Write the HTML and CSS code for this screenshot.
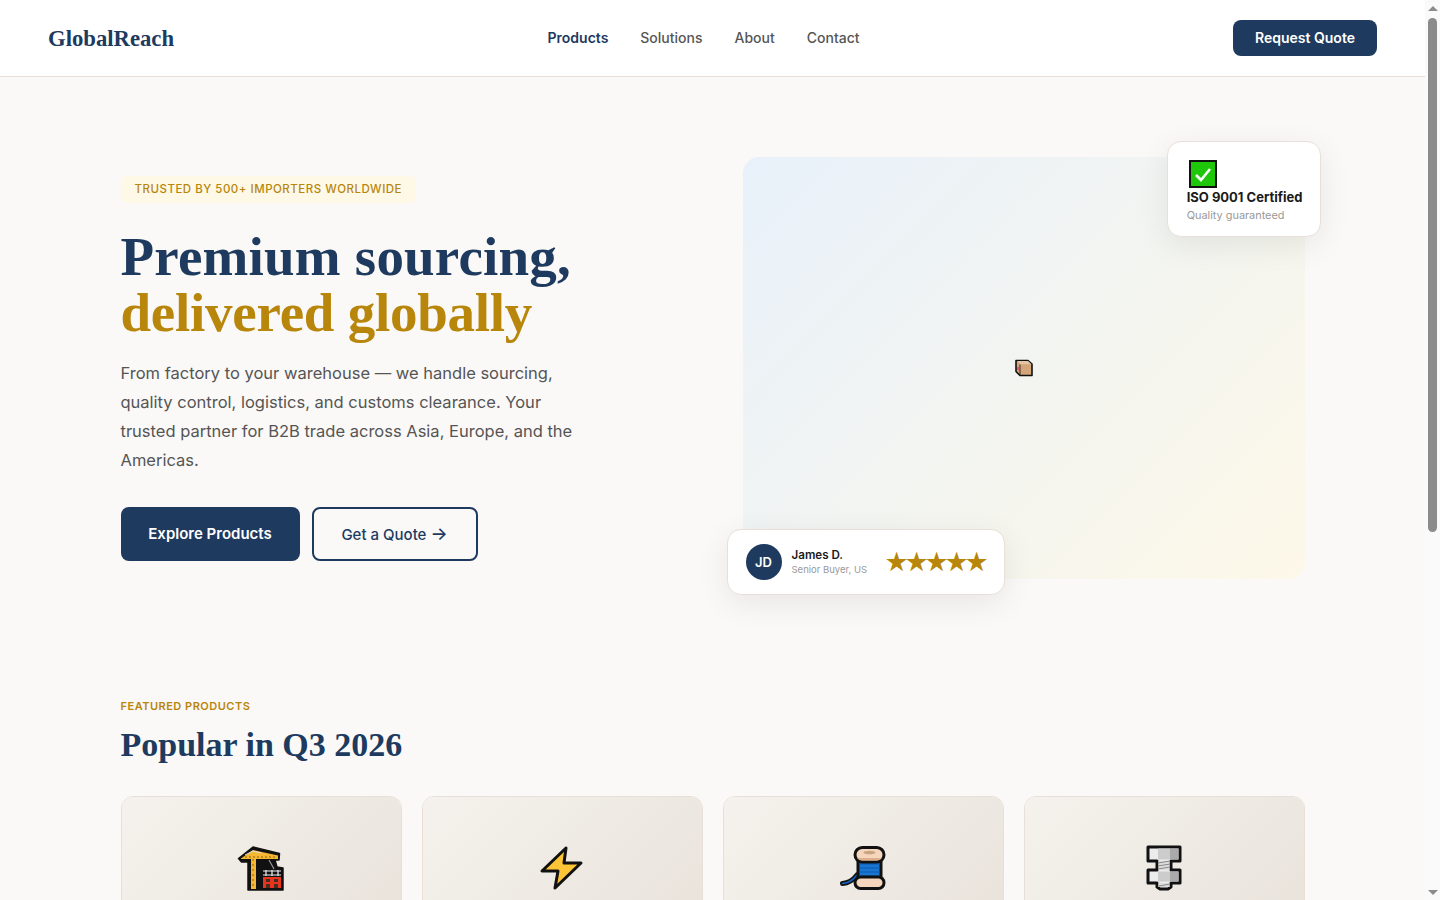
FILE: index.html
```html
<!DOCTYPE html>
<html lang="en">
<head>
    <meta charset="UTF-8">
    <meta name="viewport" content="width=device-width, initial-scale=1.0">
    <title>GlobalReach</title>
    <link rel="stylesheet" href="styles.css">
</head>
<body>
    <header class="navbar">
        <a class="logo" href="#">GlobalReach</a>
        <nav class="nav-links">
            <a class="active" href="#">Products</a>
            <a href="#">Solutions</a>
            <a href="#">About</a>
            <a href="#">Contact</a>
        </nav>
        <a class="nav-btn" href="#">Request Quote</a>
    </header>

    <!-- Hero -->
    <section class="hero">
        <div class="hero-text">
            <span class="badge">TRUSTED BY 500+ IMPORTERS WORLDWIDE</span>
            <h1>Premium sourcing,<br><span class="gold">delivered globally</span></h1>
            <p>From factory to your warehouse — we handle sourcing, quality control, logistics, and customs clearance. Your trusted partner for B2B trade across Asia, Europe, and the Americas.</p>
            <div class="hero-btns">
                <a class="btn-primary" href="#">Explore Products</a>
                <a class="btn-outline" href="#">Get a Quote <span class="arrow">→</span></a>
            </div>
        </div>
        <div class="hero-image">
            <svg class="box-icon" viewBox="0 0 18 18" width="18" height="18">
                <path d="M1 1.5 H13 L17 5 V16.5 H5 L1 12.5 Z" fill="#d2a679" stroke="#111" stroke-width="1.6" stroke-linejoin="round"/>
                <path d="M2 2 H13 L16.4 5.2 H5.4 Z" fill="#e3c4a2"/>
                <path d="M5 5.5 V16" stroke="#111" stroke-width=".8"/>
                <rect x="2" y="8" width="2" height="3" fill="#e0566a"/>
            </svg>
            <div class="float-card cert-card">
                <svg class="check-icon" viewBox="0 0 28 28" width="28" height="28">
                    <rect x="1" y="1" width="26" height="26" fill="#1ec70a" stroke="#111" stroke-width="2"/>
                    <path d="M7 15 L12 20 L21 9" fill="none" stroke="#fff" stroke-width="2.6"/>
                </svg>
                <div class="cert-title">ISO 9001 Certified</div>
                <div class="cert-sub">Quality guaranteed</div>
            </div>
            <div class="float-card review-card">
                <div class="avatar">JD</div>
                <div class="review-who">
                    <div class="review-name">James D.</div>
                    <div class="review-role">Senior Buyer, US</div>
                </div>
                <div class="stars">★★★★★</div>
            </div>
        </div>
    </section>

    <!-- Featured products -->
    <section class="featured">
        <div class="section-label">FEATURED PRODUCTS</div>
        <h2>Popular in Q3 2026</h2>
        <div class="product-grid">
            <div class="product-card">
                <div class="product-img">
                    <svg viewBox="0 0 48 48" width="48" height="48">
                        <path d="M1.5 14.5 L16 3 L42.5 9.5 L42 16 L38 16 L40 23 L46 24 V46 H11 V18 H4.5 Z" fill="#111" stroke="#111" stroke-width="1.5" stroke-linejoin="round"/>
                        <path d="M4 14.5 L16 6 L41 11.5 L41 15 L4 15 Z" fill="#f5b731"/>
                        <path d="M14 13 H19 V45 H14 Z" fill="#f5b731"/>
                        <path d="M8 13 H40 M15 16 H18 M15 21 H18 M15 26 H18 M15 31 H18 M15 36 H18 M15 41 H18" stroke="#8a6414" stroke-width="1" stroke-dasharray="2 2"/>
                        <path d="M8 11 L16 7 L24 9" fill="none" stroke="#ddd" stroke-width="1"/>
                        <path d="M32 16 L37 25" stroke="#999" stroke-width="1.2"/>
                        <path d="M26 27 H44 M26 31 H44 M29 26 V32 M35 26 V32 M41 26 V32" stroke="#eee" stroke-width="1.2"/>
                        <rect x="26" y="33" width="18" height="11" fill="#e5361d"/>
                        <path d="M29 35 H33 V38 H29 Z M37 35 H41 V38 H37 Z M29 40 H33 V44 H29 Z M37 40 H41 V44 H37 Z" fill="#4a2a22"/>
                    </svg>
                </div>
                <div class="product-body"></div>
            </div>
            <div class="product-card">
                <div class="product-img">
                    <svg viewBox="0 0 48 48" width="48" height="48">
                        <path d="M28 4 L4 27 H20 L17 44 L43 19 H26 Z" fill="#fcc537" stroke="#111" stroke-width="3" stroke-linejoin="round"/>
                    </svg>
                </div>
                <div class="product-body"></div>
            </div>
            <div class="product-card">
                <div class="product-img">
                    <svg viewBox="0 0 48 48" width="48" height="48">
                        <path d="M18 31 Q12 39 3.5 39.5" fill="none" stroke="#111" stroke-width="5" stroke-linecap="round"/>
                        <path d="M18 31 Q12 39 3.5 39.5" fill="none" stroke="#1166c4" stroke-width="1.6" stroke-linecap="round"/>
                        <rect x="19" y="12" width="23" height="24" fill="#1976d2" stroke="#111" stroke-width="3"/>
                        <path d="M20 20 H41 M20 24 H41 M20 28 H41 M20 32 H41" stroke="#0d59ab" stroke-width="1.2"/>
                        <rect x="16" y="3.5" width="29" height="14.5" rx="7.2" fill="#f6d5bd" stroke="#111" stroke-width="3"/>
                        <path d="M18 14 H43 Q41 16.5 38 16.5 H23 Q20 16.5 18 14 Z" fill="#dcb08d"/>
                        <ellipse cx="30.5" cy="8.5" rx="6" ry="1.8" fill="#c9a57f"/>
                        <rect x="16" y="33" width="29" height="11.5" rx="5.7" fill="#f6d5bd" stroke="#111" stroke-width="3"/>
                    </svg>
                </div>
                <div class="product-body"></div>
            </div>
            <div class="product-card">
                <div class="product-img">
                    <svg viewBox="0 0 48 48" width="48" height="48">
                        <path d="M8 3 H40 V17 H31 V26 H40 V39 H31 V43 L28 45 H20 L17 43 V39 H8 V26 H17 V17 H8 Z" fill="#ececec" stroke="#111" stroke-width="3" stroke-linejoin="round"/>
                        <path d="M18 4.5 H30 V15.5 H18 Z M18 27.5 H30 V37.5 H18 Z" fill="#ccc"/>
                        <path d="M30 4.5 H38.5 V15.5 H30 Z M30 27.5 H38.5 V37.5 H30 Z" fill="#aaa"/>
                        <path d="M18.5 17 H29.5 V26 H18.5 Z M18.5 39 H29.5 V43 H18.5 Z" fill="#ddd"/>
                        <path d="M18 19 L30 17 M18 22 L30 20 M18 25 L30 23 M19 42 L30 40" stroke="#888" stroke-width="1"/>
                    </svg>
                </div>
                <div class="product-body"></div>
            </div>
        </div>
    </section>

    <footer class="footer"></footer>

    <!-- Scrollbar as seen in the window -->
    <div class="scrollbar" aria-hidden="true">
        <span class="arrow-up"></span>
        <span class="thumb"></span>
        <span class="arrow-down"></span>
    </div>
</body>
</html>
```

FILE: styles.css
```css
* {
    box-sizing: border-box;
}

body {
    margin: 0 15px 0 0;
    font-family: "Inter", "Liberation Sans", sans-serif;
    background: #faf9f7;
    color: #1a1a1a;
}

a {
    text-decoration: none;
}

.navbar {
    height: 77px;
    padding: 0 48px;
    display: flex;
    align-items: center;
    justify-content: space-between;
    background: #fff;
    border-bottom: 1px solid #e8e0d8;
}

.logo {
    padding-top: 2px;
    font-family: "Liberation Serif", serif;
    font-size: 22.7px;
    font-weight: 700;
    color: #1e3a5f;
}

.nav-links {
    display: flex;
    gap: 32px;
    padding-bottom: 1px;
    font-size: 14px;
    font-weight: 500;
}

.nav-links a {
    color: #555;
}

.nav-links a.active {
    color: #1e3a5f;
    font-weight: 600;
}

.nav-btn {
    padding: 10px 22px;
    font-size: 14px;
    line-height: 16px;
    font-weight: 600;
    color: #fff;
    background: #1e3a5f;
    border-radius: 8px;
}

.hero {
    max-width: 1280px;
    margin: 0 auto;
    padding: 80px 48px;
    display: grid;
    grid-template-columns: 1fr 1fr;
    gap: 60px;
    align-items: center;
}

.badge {
    display: inline-block;
    padding: 6px 14px;
    margin-bottom: 26px;
    font-size: 11.5px;
    line-height: 15px;
    font-weight: 500;
    letter-spacing: .5px;
    color: #b8860b;
    background: #fef9e7;
    border-radius: 6px;
}

h1 {
    margin: 0 0 18px;
    font-family: "Liberation Serif", serif;
    font-size: 55px;
    line-height: 56px;
    font-weight: 700;
    letter-spacing: .2px;
    color: #1e3a5f;
}

.gold {
    letter-spacing: -.25px;
    color: #b8860b;
}

.hero-text p {
    margin: 0 0 32px;
    max-width: 480px;
    font-size: 16.5px;
    line-height: 29px;
    color: #555;
}

.hero-btns {
    display: flex;
    gap: 12px;
}

.btn-primary {
    width: 179px;
    height: 54px;
    display: flex;
    align-items: center;
    justify-content: center;
    font-size: 15px;
    font-weight: 600;
    color: #fff;
    background: #1e3a5f;
    border-radius: 8px;
}

.btn-outline {
    width: 166px;
    height: 54px;
    padding-top: 1px;
    display: flex;
    align-items: center;
    justify-content: center;
    gap: 4px;
    font-size: 15px;
    font-weight: 500;
    color: #1e3a5f;
    border: 2px solid #1e3a5f;
    border-radius: 8px;
}

.arrow {
    font-size: 18px;
    line-height: 18px;
}

.hero-image {
    position: relative;
    height: 422px;
    display: flex;
    align-items: center;
    justify-content: center;
    background: linear-gradient(135deg, #e8f1fa, #fdf8e8);
    border-radius: 16px;
}

.float-card {
    position: absolute;
    background: #fff;
    border: 1px solid #e8e0d8;
    border-radius: 14px;
    box-shadow: 0 8px 32px rgba(0, 0, 0, 0.08);
}

.cert-card {
    top: -16px;
    right: -16px;
    padding: 18px 17px 12px 19px;
}

.check-icon {
    display: block;
    margin: 0 0 1px 2px;
}

.cert-title {
    font-size: 13px;
    line-height: 16px;
    font-weight: 700;
    white-space: nowrap;
}

.cert-sub {
    margin-top: 2px;
    margin-bottom: 1px;
    font-size: 10.9px;
    line-height: 16px;
    color: #999;
}

.review-card {
    left: -16px;
    bottom: -16px;
    width: 278px;
    padding: 14px 19px 14px 18px;
    display: flex;
    align-items: center;
}

.avatar {
    width: 36px;
    height: 36px;
    margin-right: 10px;
    display: flex;
    align-items: center;
    justify-content: center;
    font-size: 13px;
    font-weight: 600;
    color: #fff;
    background: #1e3a5f;
    border-radius: 50%;
}

.review-who {
    flex: 1;
    padding-top: 1px;
}

.review-name {
    font-size: 11.6px;
    line-height: 15px;
    font-weight: 600;
}

.review-role {
    font-size: 9.5px;
    line-height: 14px;
    color: #999;
}

.stars {
    font-family: "DejaVu Sans", sans-serif;
    font-size: 27px;
    line-height: 28px;
    letter-spacing: -4.2px;
    color: #b8860b;
}

.featured {
    max-width: 1280px;
    margin: 0 auto;
    padding: 40px 48px 80px;
}

.section-label {
    margin-bottom: 9px;
    font-size: 11px;
    line-height: 14px;
    font-weight: 600;
    letter-spacing: .5px;
    color: #b8860b;
}

h2 {
    margin: 0 0 28px;
    font-family: "Liberation Serif", serif;
    font-size: 34px;
    line-height: 46px;
    font-weight: 700;
    color: #1e3a5f;
}

.product-grid {
    display: grid;
    grid-template-columns: repeat(4, 1fr);
    gap: 20px;
}

.product-card {
    background: #fff;
    border: 1px solid #e8e0d8;
    border-radius: 12px;
    overflow: hidden;
}

.product-img {
    height: 142px;
    display: flex;
    align-items: center;
    justify-content: center;
    background: linear-gradient(135deg, #f5f2ed, #e8e2da);
}

.product-body {
    height: 150px;
}

.footer {
    height: 345px;
    background: #1e3a5f;
}

.scrollbar {
    position: fixed;
    top: 0;
    right: 0;
    width: 15px;
    height: 100vh;
    padding: 6px 3px 5px;
    display: flex;
    flex-direction: column;
    align-items: center;
    background: #fafafa;
}

.thumb {
    width: 9px;
    height: 514px;
    margin-top: 7px;
    margin-bottom: auto;
    background: #8b8b8b;
    border-radius: 5px;
}

.arrow-up {
    border-left: 5px solid transparent;
    border-right: 5px solid transparent;
    border-bottom: 5px solid #8b8b8b;
}

.arrow-down {
    border-left: 5px solid transparent;
    border-right: 5px solid transparent;
    border-top: 5px solid #8b8b8b;
}
```
